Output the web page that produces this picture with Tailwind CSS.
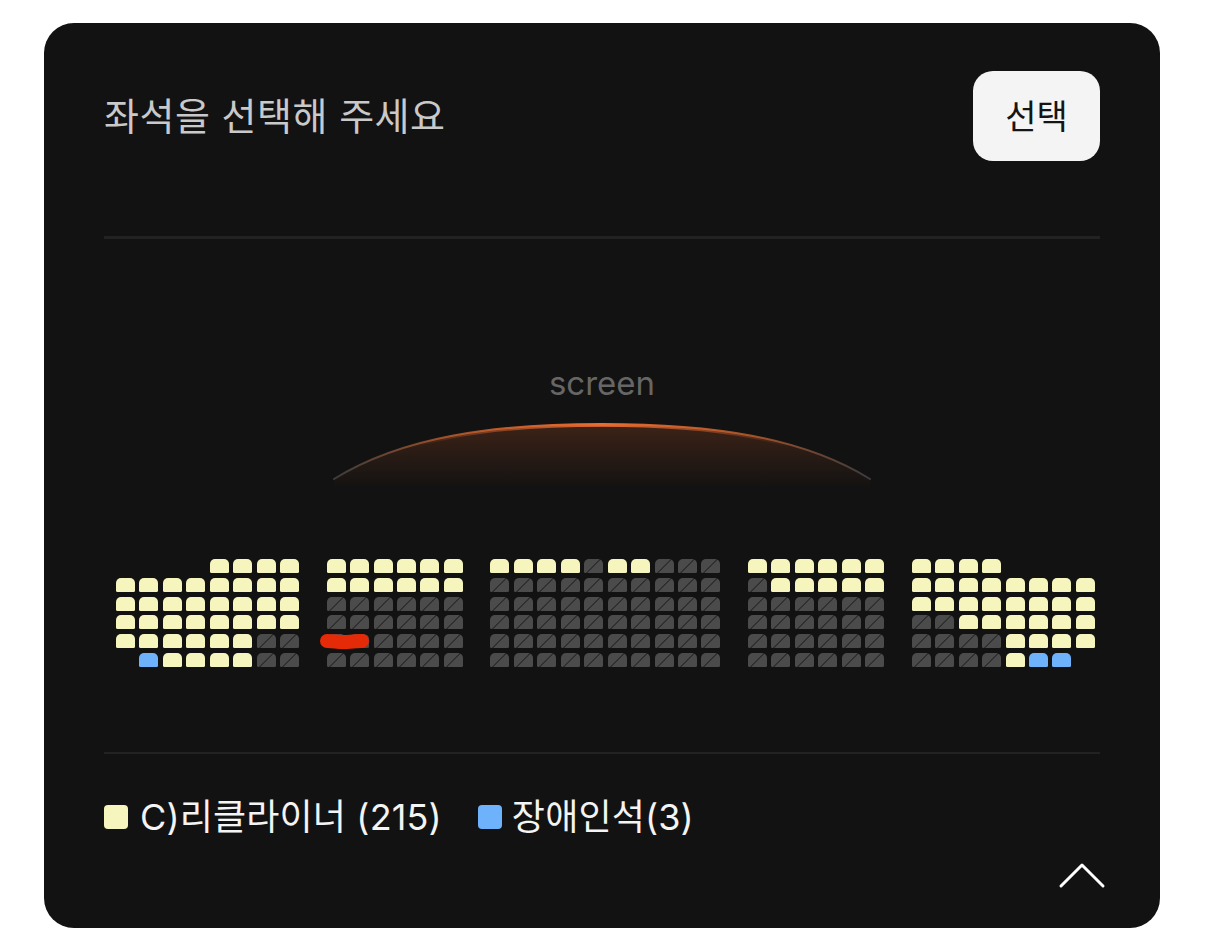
<!DOCTYPE html>
<html lang="ko">

<head>
  <meta charset="UTF-8" />
  <title>좌석 선택</title>
  <script src="https://cdn.jsdelivr.net/npm/@tailwindcss/browser@4"></script>
</head>

<body class="bg-white font-['Inter','Noto_Sans_CJK_KR',sans-serif]">
  <div class="ml-[44px] mt-[23px] w-[1116px] h-[905px] rounded-[30px] bg-[#121212] px-[60px] pt-[48px] overflow-hidden">

    <!-- header -->
    <div class="flex items-start justify-between h-[90px]">
      <h1 class="text-[38px] leading-[90px] font-normal text-[#c9c9c9] tracking-[0.5px]">좌석을 선택해 주세요</h1>
      <button class="w-[127px] h-[90px] rounded-[20px] bg-[#f4f4f4] text-[34px] text-[#151515]">선택</button>
    </div>
    <div class="mt-[75px] h-[3px] bg-[#222222]"></div>

    <!-- screen -->
    <p class="mt-[122px] text-center text-[33px] leading-[44px] text-[#666666]">screen</p>
    <svg class="block mx-auto mt-[18px]" width="540" height="66" viewBox="0 0 540 66" fill="none">
      <defs>
        <linearGradient id="glow" x1="0" y1="0" x2="0" y2="1">
          <stop offset="0" stop-color="#e8672c" stop-opacity="0.2" />
          <stop offset="1" stop-color="#e8672c" stop-opacity="0" />
        </linearGradient>
        <linearGradient id="edge" x1="0" y1="0" x2="1" y2="0">
          <stop offset="0" stop-color="#3c3c3c" />
          <stop offset="0.2" stop-color="#9a4f2a" />
          <stop offset="0.5" stop-color="#ea6c30" />
          <stop offset="0.8" stop-color="#9a4f2a" />
          <stop offset="1" stop-color="#3c3c3c" />
        </linearGradient>
        <linearGradient id="core" x1="0" y1="0" x2="1" y2="0">
          <stop offset="0.15" stop-color="#ea6c30" stop-opacity="0" />
          <stop offset="0.5" stop-color="#ea6c30" />
          <stop offset="0.85" stop-color="#ea6c30" stop-opacity="0" />
        </linearGradient>
      </defs>
      <path d="M2 56 C70 14 160 1 270 1 C380 1 470 14 538 56 L538 66 L2 66 Z" fill="url(#glow)" />
      <path d="M2 56 C70 14 160 1 270 1 C380 1 470 14 538 56" stroke="url(#edge)" stroke-width="2" stroke-linecap="round" />
      <path d="M2 57.5 C70 15.5 160 2.5 270 2.5 C380 2.5 470 15.5 538 57.5" stroke="url(#core)" stroke-width="2.5" />
    </svg>

    <!-- seats -->
    <div id="seats" class="mt-[70px] ml-[12px] flex items-start gap-x-[27.6px]"></div>

    <div class="mt-[85px] h-[2px] bg-[#222222]"></div>

    <!-- legend -->
    <div class="mt-[36px] flex items-center h-[54px] text-[36px] text-[#f4f4f4] tracking-[0.15px]">
      <span class="w-[24px] h-[24px] rounded-[4px] bg-[#f5f5bd]"></span>
      <span class="ml-[12px]">C)리클라이너 (215)</span>
      <span class="ml-[36px] w-[24px] h-[24px] rounded-[4px] bg-[#6eb2fb]"></span>
      <span class="ml-[10px]">장애인석(3)</span>
    </div>

    <div class="flex justify-end -mr-[7px] mt-[18px]">
      <svg width="50" height="28" viewBox="0 0 50 28" fill="none" stroke="#ffffff" stroke-width="3" stroke-linecap="round" stroke-linejoin="round">
        <path d="M4 24 L25 3 L46 24" />
      </svg>
    </div>
  </div>

  <script>
    // Y open, B wheelchair, X taken, . no seat
    const blocks = [
      ["....YYYY", "YYYYYYYY", "YYYYYYYY", "YYYYYYYY", "YYYYYYXX", ".BYYYYXX"],
      ["YYYYYY", "YYYYYY", "XXXXXX", "XXXXXX", "XXXXXX", "XXXXXX"],
      ["YYYYXYYXXX", "XXXXXXXXXX", "XXXXXXXXXX", "XXXXXXXXXX", "XXXXXXXXXX", "XXXXXXXXXX"],
      ["YYYYYY", "XYYYYY", "XXXXXX", "XXXXXX", "XXXXXX", "XXXXXX"],
      ["YYYY....", "YYYYYYYY", "YYYYYYYY", "XXYYYYYY", "XXXXYYYY", "XXXXYBB."],
    ];
    const seat = {
      Y: "w-[19px] h-[14px] rounded-t-[5px] rounded-b-[1.5px] bg-[#f5f5bd]",
      B: "w-[19px] h-[14px] rounded-t-[5px] rounded-b-[1.5px] bg-[#6eb2fb]",
      X: "w-[19px] h-[14px] rounded-t-[5px] rounded-b-[1.5px] bg-[linear-gradient(135deg,#4b4b4b_47%,#303030_47%,#303030_53%,#4b4b4b_53%)]",
      ".": "w-[19px] h-[14px]",
    };
    const gridClass = "relative flex flex-col gap-y-[4.75px]";
    const rowClass = "flex gap-x-[4.45px]";

    const root = document.querySelector("#seats");
    blocks.forEach((rows, b) => {
      const block = document.createElement("div");
      block.className = gridClass;
      rows.forEach(row => {
        const r = document.createElement("div");
        r.className = rowClass;
        for (const c of row) {
          const s = document.createElement("div");
          s.className = seat[c];
          r.appendChild(s);
        }
        block.appendChild(r);
      });
      if (b === 1) {
        // red marker scribble over row 5
        block.insertAdjacentHTML("beforeend",
          '<svg class="absolute left-[-8px] top-[73px]" width="52" height="18" viewBox="0 0 52 18" fill="none"><path d="M8 9 C14 9 18 10 24 10 C30 10 38 9 43 9" stroke="#e42a07" stroke-width="14" stroke-linecap="round" /></svg>');
      }
      root.appendChild(block);
    });
  </script>
</body>

</html>
